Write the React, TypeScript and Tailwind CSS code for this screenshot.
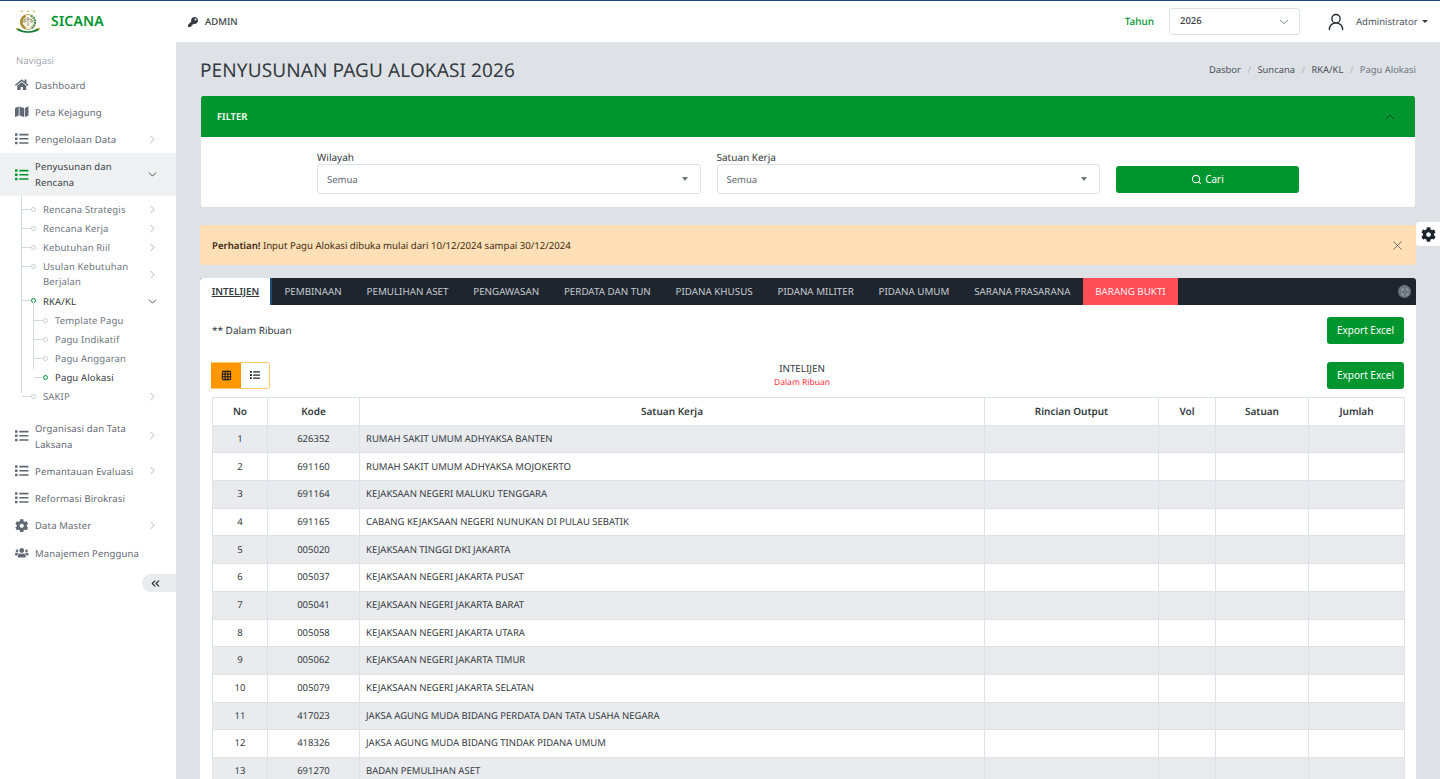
import { ChevronDown, ChevronRight, ChevronUp, ChevronsLeft, Grid3x3, Maximize, Search, UserRound, X } from "lucide-react";
import { FaCog, FaHome, FaKey, FaList, FaMap, FaUsers } from "react-icons/fa";
import { ReactNode } from "react";

const rows = [
  ["626352", "RUMAH SAKIT UMUM ADHYAKSA BANTEN"],
  ["691160", "RUMAH SAKIT UMUM ADHYAKSA MOJOKERTO"],
  ["691164", "KEJAKSAAN NEGERI MALUKU TENGGARA"],
  ["691165", "CABANG KEJAKSAAN NEGERI NUNUKAN DI PULAU SEBATIK"],
  ["005020", "KEJAKSAAN TINGGI DKI JAKARTA"],
  ["005037", "KEJAKSAAN NEGERI JAKARTA PUSAT"],
  ["005041", "KEJAKSAAN NEGERI JAKARTA BARAT"],
  ["005058", "KEJAKSAAN NEGERI JAKARTA UTARA"],
  ["005062", "KEJAKSAAN NEGERI JAKARTA TIMUR"],
  ["005079", "KEJAKSAAN NEGERI JAKARTA SELATAN"],
  ["417023", "JAKSA AGUNG MUDA BIDANG PERDATA DAN TATA USAHA NEGARA"],
  ["418326", "JAKSA AGUNG MUDA BIDANG TINDAK PIDANA UMUM"],
  ["691270", "BADAN PEMULIHAN ASET"],
];

const tabs = [
  "PEMBINAAN",
  "PEMULIHAN ASET",
  "PENGAWASAN",
  "PERDATA DAN TUN",
  "PIDANA KHUSUS",
  "PIDANA MILITER",
  "PIDANA UMUM",
  "SARANA PRASARANA",
];

function Logo() {
  return (
    <svg viewBox="0 0 26 28" className="h-[28px] w-[26px] shrink-0">
      <path d="M7 2l1 2H6zM13 2l1 2h-2zM19 2l1 2h-2z" fill="#d1a92e" />
      <circle cx="13" cy="14" r="7.5" fill="#f7f3e3" stroke="#c2ad5c" strokeWidth="1" />
      <path d="M10.5 7.8a6.8 6.8 0 0 0 0 12.4" fill="none" stroke="#a98d2c" strokeWidth="2.4" />
      <path d="M16 7.8a6.8 6.8 0 0 1 0 12.4" fill="none" stroke="#3f8f55" strokeWidth="2.2" strokeDasharray="1.6 1" />
      <path d="M13 9v9M10 11h6M9.5 11l-1 3h2.4zM16.5 11l-1 3h2.4z" fill="none" stroke="#6e6a4a" strokeWidth="0.6" />
      <path d="M1.5 21c3 5 20 5 23 0l-2.2-.4c-4 3.4-14.6 3.4-18.6 0z" fill="#0f7a35" />
      <path d="M1 20.5l3.4.4M25 20.5l-3.4.4" stroke="#d1a92e" strokeWidth="1.2" />
    </svg>
  );
}

function NavItem({
  icon,
  children,
  arrow,
  active,
}: {
  icon: ReactNode;
  children: ReactNode;
  arrow?: "right" | "down";
  active?: boolean;
}) {
  return (
    <div
      className={`flex items-center pl-[15px] pr-[17px] py-[4.5px] min-h-[27.3px] text-[9.5px] leading-[16px] tracking-[0.15px] ${
        active ? "bg-[#f0f1f3] text-[#343a40]" : "text-[#5f6873]"
      }`}
    >
      <span className={`w-[20px] shrink-0 flex items-center text-[13.5px] ${active ? "text-[#00962f]" : "text-[#5f6873]"}`}>
        {icon}
      </span>
      <span className="flex-1 min-w-0 pr-[10px] pt-[2px]">{children}</span>
      {arrow === "right" && <ChevronRight size={13} strokeWidth={1.2} className="text-[#868e96] shrink-0" />}
      {arrow === "down" && <ChevronDown size={13} strokeWidth={1.6} className="text-[#343a40] shrink-0" />}
    </div>
  );
}

function SubItem({
  children,
  arrow,
  on,
  deep,
}: {
  children: ReactNode;
  arrow?: "right" | "down";
  on?: boolean;
  deep?: boolean;
}) {
  return (
    <div
      className={`relative flex items-center py-[2px] pr-[17px] min-h-[19.2px] text-[9.5px] leading-[15px] tracking-[0.15px] ${
        deep ? "pl-[55px]" : "pl-[43px]"
      } ${on ? "text-[#343a40]" : "text-[#6c757d]"}`}
    >
      <span className={`absolute top-[9px] h-px w-[9px] bg-[#d5d9de] ${deep ? "left-[34px]" : "left-[22px]"}`} />
      <span
        className={`absolute top-[7px] h-[5px] w-[5px] rounded-full bg-white ${deep ? "left-[43px]" : "left-[31px]"} ${
          on ? "border-[1.5px] border-[#00962f]" : "border border-[#c9ced4]"
        }`}
      />
      <span className="flex-1 min-w-0 pr-[10px]">{children}</span>
      {arrow === "right" && <ChevronRight size={13} strokeWidth={1.2} className="text-[#868e96] shrink-0" />}
      {arrow === "down" && <ChevronDown size={13} strokeWidth={1.6} className="text-[#343a40] shrink-0" />}
    </div>
  );
}

function Sidebar() {
  return (
    <aside className="w-[176px] shrink-0 bg-white pt-[12px] pb-[200px]">
      <div className="pl-[16px] pb-[3px] text-[9.5px] leading-[14px] text-[#a3a9b0]">Navigasi</div>
      <NavItem icon={<FaHome />}>Dashboard</NavItem>
      <NavItem icon={<FaMap />}>Peta Kejagung</NavItem>
      <NavItem icon={<FaList />} arrow="right">
        Pengelolaan Data
      </NavItem>
      <NavItem icon={<FaList />} arrow="down" active>
        Penyusunan dan Rencana
      </NavItem>
      <div className="relative pt-[4px] pb-[7.5px]">
        <span className="absolute left-[21px] top-0 h-[197px] w-px bg-[#d5d9de]" />
        <SubItem arrow="right">Rencana Strategis</SubItem>
        <SubItem arrow="right">Rencana Kerja</SubItem>
        <SubItem arrow="right">Kebutuhan Riil</SubItem>
        <SubItem arrow="right">Usulan Kebutuhan Berjalan</SubItem>
        <SubItem arrow="down" on>
          RKA/KL
        </SubItem>
        <div className="relative">
          <span className="absolute left-[33px] top-[-9px] h-[67px] w-px bg-[#d5d9de]" />
          <SubItem deep>Template Pagu</SubItem>
          <SubItem deep>Pagu Indikatif</SubItem>
          <SubItem deep>Pagu Anggaran</SubItem>
          <SubItem deep on>
            Pagu Alokasi
          </SubItem>
        </div>
        <SubItem arrow="right">SAKIP</SubItem>
      </div>
      <NavItem icon={<FaList />} arrow="right">
        Organisasi dan Tata Laksana
      </NavItem>
      <NavItem icon={<FaList />} arrow="right">
        Pemantauan Evaluasi
      </NavItem>
      <NavItem icon={<FaList />}>Reformasi Birokrasi</NavItem>
      <NavItem icon={<FaCog />} arrow="right">
        Data Master
      </NavItem>
      <NavItem icon={<FaUsers />}>Manajemen Pengguna</NavItem>
      <div className="flex justify-end mt-[8px]">
        <div className="flex h-[18px] w-[34px] items-center justify-start pl-[7px] rounded-l-full bg-[#e9ecef] text-[#212529]">
          <ChevronsLeft size={13} strokeWidth={2} />
        </div>
      </div>
    </aside>
  );
}

function SelectBox({ label, value }: { label: string; value: string }) {
  return (
    <div className="flex-1">
      <div className="text-[10px] leading-[15px] text-[#343a40] mb-[-1px]">{label}</div>
      <div className="flex h-[30px] items-center justify-between rounded-[3px] border border-[#dee2e6] bg-white pl-[9px] pr-[12px] text-[9.5px] text-[#5f6873]">
        <span className="pt-[2px]">{value}</span>
        <span className="h-0 w-0 border-x-[3.5px] border-t-[4px] border-x-transparent border-t-[#6c757d]" />
      </div>
    </div>
  );
}

function ExportBtn() {
  return (
    <button className="flex h-[27px] w-[77px] items-center justify-center rounded-[3px] bg-[#00962f] text-[10px] text-white">
      Export Excel
    </button>
  );
}

const th = "border border-[#dee2e6] font-semibold text-[10px] text-[#343a40] text-center";
const td = "border border-[#dee2e6] text-[9.5px] text-[#343a40]";

export default function App() {
  return (
    <div className="h-[779px] overflow-hidden bg-[#dee2e6] font-['Noto_Sans',sans-serif] [text-rendering:geometricPrecision]">
      <header className="flex h-[42px] items-center border-t border-t-[#1c4a75] bg-white">
        <div className="flex w-[176px] shrink-0 items-center pl-[15px]">
          <Logo />
          <span className="ml-[10px] text-[14px] font-semibold tracking-[0.2px] text-[#00962f]">SICANA</span>
        </div>
        <div className="ml-[12px] flex items-center text-[#343a40]">
          <FaKey className="text-[10px] mr-[7px]" />
          <span className="pt-[1px] text-[9.5px] font-medium">ADMIN</span>
        </div>
        <div className="ml-auto flex items-center">
          <span className="mr-[15px] text-[10px] font-medium text-[#00962f]">Tahun</span>
          <div className="flex h-[27px] w-[131px] items-center justify-between rounded-[3px] border border-[#dee2e6] pl-[10px] pr-[8px] text-[9.5px] font-medium text-[#343a40]">
            2026
            <ChevronDown size={14} strokeWidth={1.2} className="text-[#495057]" />
          </div>
          <UserRound size={20} strokeWidth={1.6} className="ml-[26px] text-[#212529]" />
          <span className="ml-[10px] w-[62px] pt-[1px] text-[9.5px] text-[#495057]">Administrator</span>
          <span className="ml-[4px] mr-[12px] h-0 w-0 border-x-[3px] border-t-[3px] border-x-transparent border-t-[#343a40]" />
        </div>
      </header>
      <div className="flex">
        <Sidebar />
        <main className="relative min-w-0 flex-1 px-[24px]">
          <div className="flex h-[54px] items-center justify-between pt-[3px]">
            <h1 className="text-[19px] text-[#343a40] tracking-[0.1px]">PENYUSUNAN PAGU ALOKASI 2026</h1>
            <div className="flex items-center text-[9.4px] text-[#495057]">
              <span>Dasbor</span>
              <span className="mx-[6.5px] text-[#adb5bd]">/</span>
              <span>Suncana</span>
              <span className="mx-[6.5px] text-[#adb5bd]">/</span>
              <span>RKA/KL</span>
              <span className="mx-[6.5px] text-[#adb5bd]">/</span>
              <span className="text-[#6c757d]">Pagu Alokasi</span>
            </div>
          </div>

          <section className="overflow-hidden rounded-[3px] bg-white border border-[#dee2e6] border-t-0">
            <div className="flex h-[41px] items-center justify-between bg-[#00962f] pl-[16px] pr-[17px] text-[9.5px] font-semibold text-white">
              <span className="pt-[2px]">FILTER</span>
              <ChevronUp size={16} strokeWidth={1.4} className="mt-[1px] text-[#07451d]" />
            </div>
            <div className="flex items-end gap-[16px] pb-[13px] pl-[116px] pr-[116px] pt-[13px]">
              <SelectBox label="Wilayah" value="Semua" />
              <SelectBox label="Satuan Kerja" value="Semua" />
              <button className="flex h-[27px] w-[183px] shrink-0 mb-[1px] items-center justify-center gap-[3px] rounded-[3px] bg-[#00962f] text-[10px] text-white">
                <Search size={11} strokeWidth={2.2} />
                Cari
              </button>
            </div>
          </section>

          <div className="mt-[17px] flex h-[40px] items-center justify-between rounded-[2px] bg-[#ffdfb5] pl-[12px] pr-[11px] text-[9.6px] text-[#3a2a10]">
            <span className="pt-[2px]">
              <b className="font-semibold">Perhatian!</b> Input Pagu Alokasi dibuka mulai dari 10/12/2024 sampai 30/12/2024
            </span>
            <X size={15} strokeWidth={1.2} className="mt-[1px] text-[#4a4a4a]" />
          </div>

          <section className="mt-[13px] rounded-[3px] bg-white">
            <div className="flex h-[27px] items-center rounded-t-[3px] bg-[#1e252e] text-[9.8px] text-[#c6cbd0]">
              <div className="flex h-full w-[72px] items-center justify-center rounded-tl-[3px] border-r-2 border-r-[#1c4a75] bg-white pl-[1px] pt-[1px] font-semibold text-[#343a40] underline">
                INTELIJEN
              </div>
              {tabs.map((t) => (
                <div key={t} className="flex h-full items-center px-[12.4px] pt-[1px]">
                  {t}
                </div>
              ))}
              <div className="flex h-full items-center bg-[#ff4d57] px-[12.4px] pt-[1px] text-[#fff0f0]">BARANG BUKTI</div>
              <div className="ml-auto mr-[5px] flex h-[13px] w-[13px] items-center justify-center rounded-full bg-[#6c757d] text-[#dee2e6]">
                <Maximize size={8} strokeWidth={1.5} />
              </div>
            </div>

            <div className="px-[12px] pt-[12px]">
              <div className="flex h-[27px] items-center justify-between">
                <span className="text-[10px] text-[#343a40]">** Dalam Ribuan</span>
                <ExportBtn />
              </div>
              <div className="mt-[17px] flex h-[28px] items-center justify-between">
                <div className="-ml-[1px] flex h-[27px] w-[59px] overflow-hidden rounded-r-[3px] border border-[#ffc870] border-l-0">
                  <div className="flex w-[30px] items-center justify-center bg-[#ff9800] text-[#1a1a1a]">
                    <Grid3x3 size={11} strokeWidth={2.2} />
                  </div>
                  <div className="flex flex-1 items-center justify-center bg-white text-[10px] text-[#212529]">
                    <FaList />
                  </div>
                </div>
                <div className="ml-[7px] pt-[1px] text-center">
                  <div className="text-[9.8px] leading-[14px] text-[#343a40]">INTELIJEN</div>
                  <div className="text-[8.5px] leading-[13px] text-[#ff2d3c]">Dalam Ribuan</div>
                </div>
                <ExportBtn />
              </div>
              <table className="mt-[8px] w-[1192px] table-fixed border-collapse">
                <colgroup>
                  <col className="w-[55px]" />
                  <col className="w-[92px]" />
                  <col className="w-[625px]" />
                  <col className="w-[174px]" />
                  <col className="w-[57px]" />
                  <col className="w-[93px]" />
                  <col className="w-[96px]" />
                </colgroup>
                <thead>
                  <tr className="h-[27.7px]">
                    <th className={th}>No</th>
                    <th className={th}>Kode</th>
                    <th className={th}>Satuan Kerja</th>
                    <th className={th}>Rincian Output</th>
                    <th className={th}>Vol</th>
                    <th className={th}>Satuan</th>
                    <th className={th}>Jumlah</th>
                  </tr>
                </thead>
                <tbody>
                  {rows.map(([kode, nama], i) => (
                    <tr key={kode} className={`h-[27.7px] ${i % 2 === 0 ? "bg-[#e9ebef]" : "bg-white"}`}>
                      <td className={`${td} text-center`}>{i + 1}</td>
                      <td className={`${td} text-center`}>{kode}</td>
                      <td className={`${td} px-[6px]`}>{nama}</td>
                      <td className={td} />
                      <td className={td} />
                      <td className={td} />
                      <td className={td} />
                    </tr>
                  ))}
                </tbody>
              </table>
            </div>
          </section>

          <div className="absolute right-0 top-[180px] flex h-[24px] w-[24px] items-center justify-center rounded-l-[3px] bg-white text-[15px] text-[#1e252e]">
            <FaCog />
          </div>
        </main>
      </div>
    </div>
  );
}
